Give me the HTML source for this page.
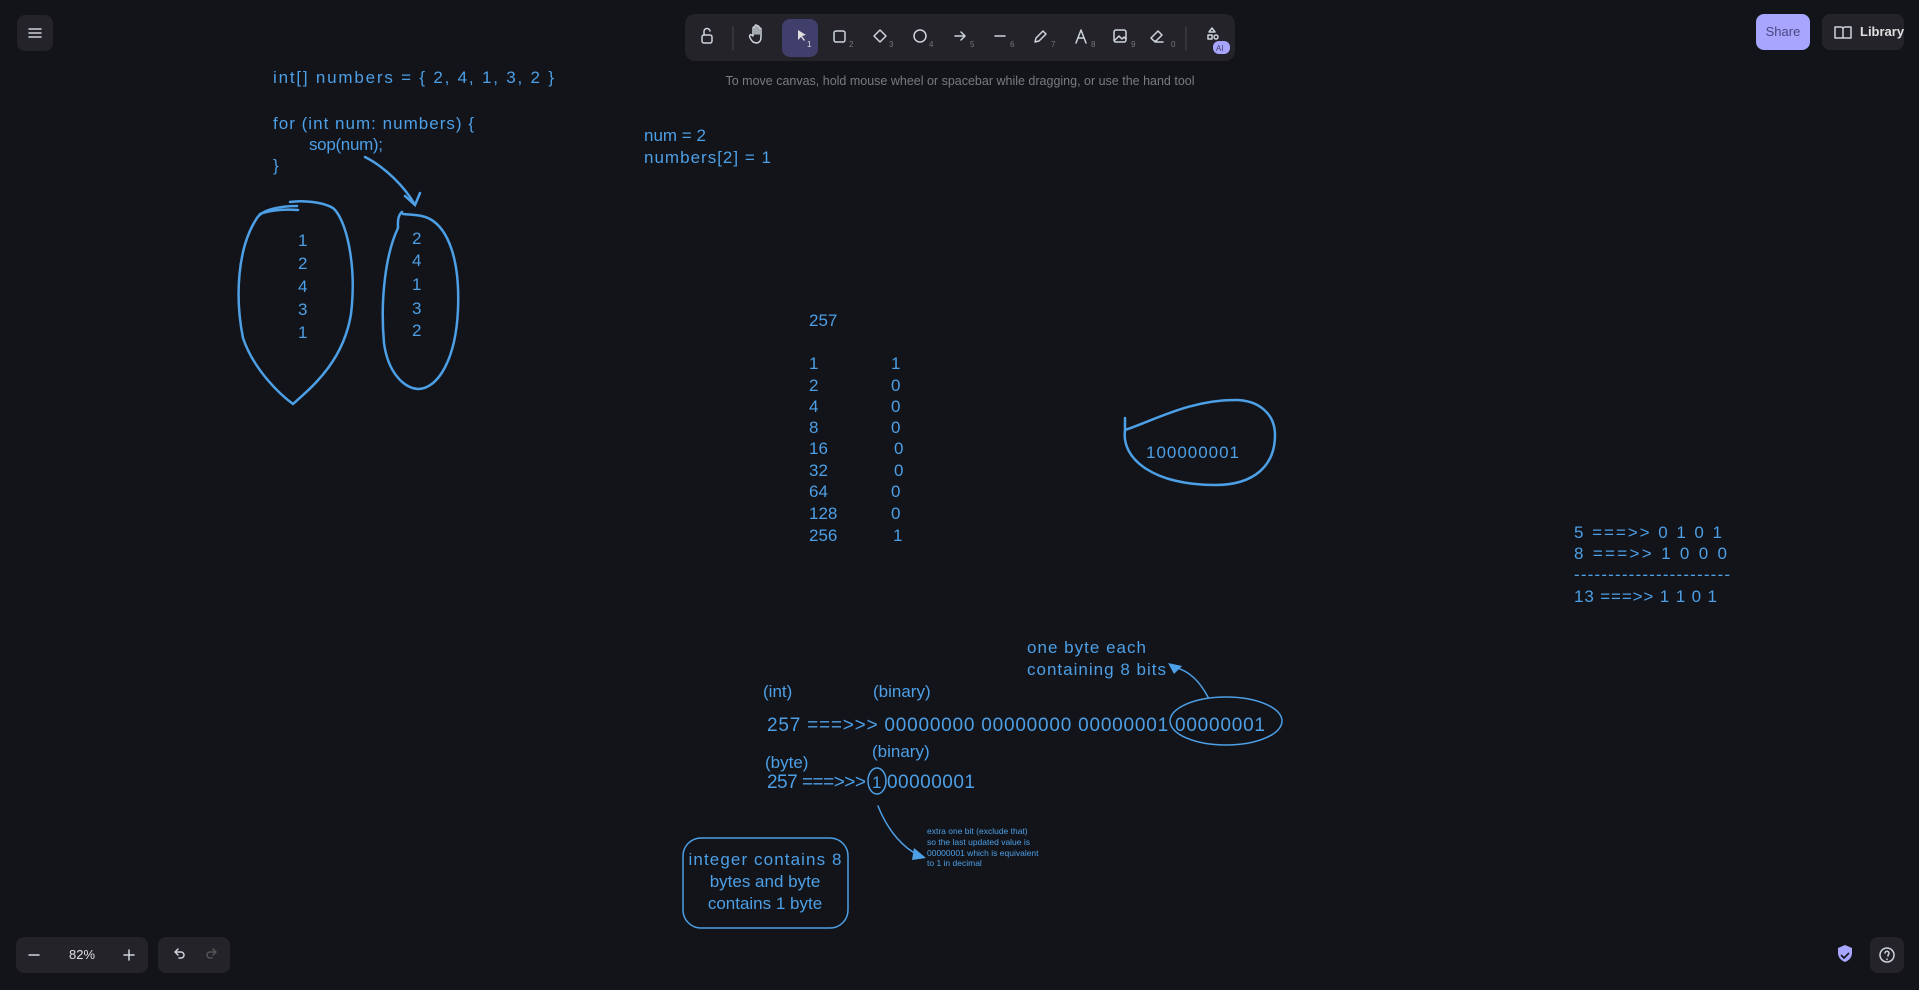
<!DOCTYPE html>
<html><head><meta charset="utf-8"><style>
html,body{margin:0;padding:0;background:#121419;width:1919px;height:990px;overflow:hidden;font-family:"Liberation Sans",sans-serif}
.b{position:absolute;background:#232329;border-radius:8px}
svg{position:absolute;left:0;top:0}
.t{fill:#4d9fe6;font-family:"Liberation Sans",sans-serif;font-size:17px}
.ic{stroke:#ced4da;fill:none;stroke-width:1.5;stroke-linecap:round;stroke-linejoin:round}
.n{fill:#777;font-size:8px;font-family:"Liberation Sans",sans-serif}
</style></head><body>
<div class="b" style="left:17px;top:15px;width:36px;height:36px"></div>
<div class="b" style="left:685px;top:14px;width:550px;height:47px;border-radius:10px"></div>
<div style="position:absolute;left:782px;top:19px;width:36px;height:38px;background:#403e6a;border-radius:8px"></div>
<div style="position:absolute;left:685px;top:74px;width:550px;text-align:center;color:#7a7a80;font-size:12.5px">To move canvas, hold mouse wheel or spacebar while dragging, or use the hand tool</div>
<div style="position:absolute;left:1756px;top:14px;width:54px;height:36px;background:#a8a5ff;border-radius:8px;color:#4a4780;font-size:13px;line-height:36px;text-align:center">Share</div>
<div class="b" style="left:1822px;top:14px;width:82px;height:36px;color:#e0e0e0;font-size:13px;font-weight:bold;line-height:36px"><span style="position:absolute;left:38px">Library</span></div>
<div class="b" style="left:16px;top:937px;width:132px;height:36px;color:#e0e0e0;font-size:13px;line-height:36px"><span style="position:absolute;left:53px">82%</span></div>
<div class="b" style="left:158px;top:937px;width:72px;height:36px"></div>
<div class="b" style="left:1870px;top:937px;width:34px;height:36px"></div>
<svg width="1919" height="990">
<g class="ic">
<path d="M29 29h12M29 33h12M29 37h12"/>
<rect x="702" y="35" width="10" height="8" rx="2"/><path d="M704 35v-3a3 3 0 0 1 6 -1"/>
<line x1="733" y1="27" x2="733" y2="50" stroke="#3a3a40"/>
<path d="M753 42c-3-3-4-6-3-7s2 0 3 1v-8a1 1 0 0 1 2 0v6-8a1 1 0 0 1 2 0v8-7a1 1 0 0 1 2 0v7-5a1 1 0 0 1 2 0v8c0 4-2 6-5 6z"/>
<rect x="834" y="31" width="11" height="11" rx="2"/>
<path d="M880 30l6 6-6 6-6-6z"/>
<circle cx="920" cy="36" r="6"/>
<path d="M955 36h10M961 32l4 4-4 4"/>
<path d="M995 36h10"/>
<path d="M1035 42l1-4 7-7 3 3-7 7z"/>
<path d="M1076 43l5-13 5 13M1078 38h6"/>
<rect x="1114" y="30" width="12" height="12" rx="2"/><path d="M1115 40l4-4 3 3 2-2 2 2"/>
<path d="M1154 41l-3-3 7-7 4 4-6 6zM1155 42h8"/>
<line x1="1186" y1="27" x2="1186" y2="50" stroke="#3a3a40"/>
<path d="M1212 28l3 4h-6z"/><rect x="1208" y="35" width="4" height="4"/><circle cx="1216" cy="37" r="2"/>
<path d="M1835 27h6a2 2 0 0 1 2 2v9h-8zM1851 27h-6a2 2 0 0 0-2 2v9h8z"/>
<path d="M29 955h10M124 955h10M129 950v10"/>
<path d="M175 952h6a3 3 0 0 1 0 6h-2M175 952l3-3M175 952l3 3"/>
<path d="M216 952h-6a3 3 0 0 0 0 6h2M216 952l-3-3M216 952l-3 3" stroke="#555"/>
<circle cx="1887" cy="955" r="7"/><path d="M1885 953a2 2 0 1 1 3 2v1M1887 959v.5"/>
</g>
<path d="M1838 948l7-3 7 3v5c0 5-4 8-7 9-3-1-7-4-7-9z" fill="#a8a5ff"/><path d="M1841 955l3 3 5-5" stroke="#121419" stroke-width="1.6" fill="none"/>
<text x="807" y="47" fill="#e0e0e0" font-size="8">1</text>
<text x="849" y="47" class="n">2</text><text x="889" y="47" class="n">3</text><text x="929" y="47" class="n">4</text><text x="970" y="47" class="n">5</text><text x="1010" y="47" class="n">6</text><text x="1051" y="47" class="n">7</text><text x="1091" y="47" class="n">8</text><text x="1131" y="47" class="n">9</text><text x="1171" y="47" class="n">0</text>
<path d="M798 30l8 5-4 1 3 4-1 1-3-4-3 3z" fill="#e0e0e0"/>
<rect x="1213" y="41" width="17" height="13" rx="6" fill="#a8a5ff"/><text x="1216" y="51" fill="#403e6a" font-size="8">AI</text>
<g fill="none" stroke="#4d9fe6" stroke-width="2.5" stroke-linecap="round">
<path d="M297 206c-18 0-35 4-40 12-20 30-22 80-14 120 10 30 35 55 50 66 15-14 50-40 58-90 6-50-5-95-18-106-10-6-30-8-43-6"/>
<path d="M260 214c10-4 25-5 38-4"/>
<path d="M402 212c-5 4-4 12-4 16-12 25-18 70-14 115 4 30 20 45 34 46 20 0 38-30 40-80 2-50-10-80-28-90-10-5-20-4-27-5"/>
<path d="M365 157c20 10 40 30 50 48M405 196l10 9 5-12"/>
<path d="M1125 430c-4 30 30 55 90 55 40 0 60-20 60-50 0-20-15-35-40-35-45 0-80 20-110 30M1125 418v14"/>
<rect x="683" y="838" width="165" height="90" rx="18" stroke-width="1.5"/>
<ellipse cx="1226" cy="721" rx="56" ry="24" stroke-width="1.5"/>
<ellipse cx="877" cy="781" rx="9" ry="13" stroke-width="1.5"/>
<path d="M1208 697c-8-15-18-26-34-30" stroke-width="1.5"/>
<path d="M878 806c10 25 25 42 42 50" stroke-width="1.5"/>
</g>
<path d="M1168 663l14 3-8 8z" fill="#4d9fe6"/>
<path d="M914 848l12 10-14 2z" fill="#4d9fe6"/>
<g class="t">
<text x="273" y="83" textLength="281">int[] numbers = { 2, 4, 1, 3, 2 }</text>
<text x="273" y="129" textLength="201">for (int num: numbers) {</text>
<text x="309" y="150" textLength="74">sop(num);</text>
<text x="273" y="171">}</text>
<text x="644" y="141">num = 2</text>
<text x="644" y="163" textLength="127">numbers[2] = 1</text>
<text x="298" y="246">1</text><text x="298" y="269">2</text><text x="298" y="292">4</text><text x="298" y="315">3</text><text x="298" y="338">1</text>
<text x="412" y="244">2</text><text x="412" y="266">4</text><text x="412" y="290">1</text><text x="412" y="314">3</text><text x="412" y="336">2</text>
<text x="809" y="326">257</text>
<text x="809" y="369">1</text><text x="809" y="391">2</text><text x="809" y="412">4</text><text x="809" y="433">8</text><text x="809" y="454">16</text><text x="809" y="476">32</text><text x="809" y="497">64</text><text x="809" y="519">128</text><text x="809" y="541">256</text>
<text x="891" y="369">1</text><text x="891" y="391">0</text><text x="891" y="412">0</text><text x="891" y="433">0</text><text x="894" y="454">0</text><text x="894" y="476">0</text><text x="891" y="497">0</text><text x="891" y="519">0</text><text x="893" y="541">1</text>
<text x="1146" y="458" textLength="93">100000001</text>
<text x="1574" y="538" textLength="148">5 ===&gt;&gt;  0 1 0 1</text>
<text x="1574" y="559" textLength="153">8 ===&gt;&gt;  1 0 0 0</text>
<text x="1574" y="580" textLength="156">-----------------------</text>
<text x="1574" y="602" textLength="143">13 ===&gt;&gt;  1 1 0 1</text>
<text x="1027" y="653" textLength="119">one byte each</text>
<text x="1027" y="675" textLength="139">containing 8 bits</text>
<text x="763" y="697">(int)</text>
<text x="873" y="697">(binary)</text>
<text x="767" y="731" font-size="19" textLength="498">257 ===&gt;&gt;&gt; 00000000 00000000 00000001 00000001</text>
<text x="872" y="757">(binary)</text>
<text x="765" y="768">(byte)</text>
<text x="767" y="788" font-size="19" textLength="99">257 ===&gt;&gt;&gt;</text>
<text x="872" y="788" font-size="17">1</text>
<text x="887" y="788" font-size="19" textLength="88">00000001</text>
<text x="765" y="865" text-anchor="middle" textLength="153">integer contains 8</text>
<text x="765" y="887" text-anchor="middle">bytes and byte</text>
<text x="765" y="909" text-anchor="middle">contains 1 byte</text>
<g font-size="8.5"><text x="927" y="834">extra one bit (exclude that)</text><text x="927" y="845">so the last updated value is</text><text x="927" y="856">00000001 which is equivalent</text><text x="927" y="866">to 1 in decimal</text></g>
</g>
</svg>
</body></html>
